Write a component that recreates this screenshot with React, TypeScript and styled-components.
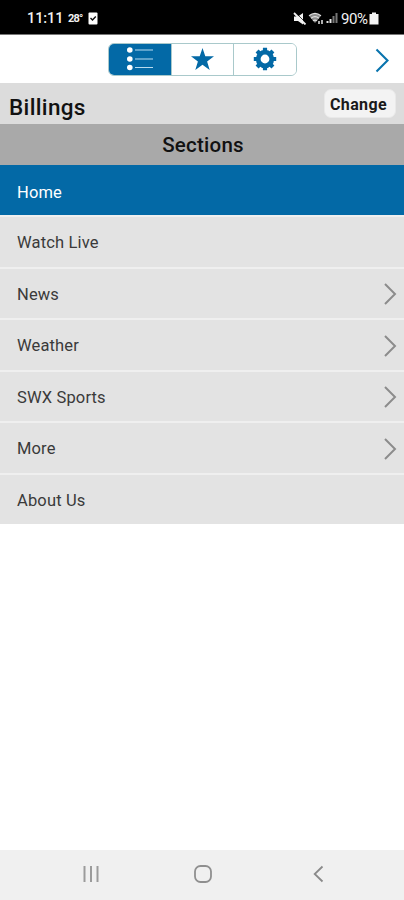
import React from 'react';
import styled, { createGlobalStyle } from 'styled-components';

const colours = {
  blue: '#0369a6',
  grey: '#e3e3e3',
  line: '#efefef',
  text: '#3a3a3a',
};

const GlobalStyle = createGlobalStyle`
  * {
    box-sizing: border-box;
  }

  body {
    margin: 0;
    background-color: #ffffff;
    font-family: Roboto, 'Liberation Sans', sans-serif;
  }
`;

const Screen = styled.div`
  display: flex;
  flex-direction: column;
  width: 100%;
  height: 100vh;
  overflow: hidden;
`;

const StatusBar = styled.div`
  display: flex;
  flex: none;
  align-items: center;
  justify-content: space-between;
  height: 35px;
  padding: 2px 25px 0 27px;
  color: #f2f2f2;
  background-color: #000000;
  border-bottom: 1px solid #777777;
`;

const StatusGroup = styled.div`
  display: flex;
  align-items: center;
`;

const Clock = styled.span`
  width: 36px;
  padding-top: 2px;
  font-size: 14.5px;
  font-weight: 500;
  letter-spacing: -0.1px;
  line-height: 18px;
  white-space: nowrap;
`;

const Temperature = styled.span`
  width: 15px;
  margin: 0 5px;
  font-size: 11px;
  font-weight: 700;
  letter-spacing: -0.8px;
`;

const Battery = styled.span`
  width: 28px;
  margin-left: 3px;
  padding-top: 2px;
  font-size: 15px;
  letter-spacing: -0.4px;
  line-height: 18px;
`;

const Toolbar = styled.div`
  display: flex;
  flex: none;
  justify-content: space-between;
  align-items: center;
  height: 48px;
  padding: 3px 14px 0 108px;
`;

const Tabs = styled.div`
  display: flex;
  width: 189px;
  height: 33px;
  margin-bottom: 3px;
  border: 1px solid #a9c9cb;
  border-radius: 6px;
  overflow: hidden;
`;

const Tab = styled.button<{ $active?: boolean }>`
  display: flex;
  flex: 1;
  align-items: center;
  justify-content: center;
  padding: 0;
  border: 0;
  color: ${({ $active }) => ($active ? '#ffffff' : colours.blue)};
  background-color: ${({ $active }) => ($active ? colours.blue : '#ffffff')};

  & + & {
    border-left: 1px solid #a9c9cb;
  }
`;

const LocationBar = styled.div`
  display: flex;
  flex: none;
  align-items: center;
  justify-content: space-between;
  height: 41px;
  padding: 0 8px 0 9px;
  background-color: #dcdcdc;
`;

const LocationName = styled.h1`
  margin: 6px 0 0;
  color: #111111;
  font-size: 22.5px;
  font-weight: 500;
  letter-spacing: 0.35px;
  line-height: 26px;
`;

const ChangeButton = styled.button`
  width: 72px;
  height: 29px;
  padding: 2px 3px 0 0;
  border: 1px solid #e9e9e9;
  border-radius: 7px;
  color: #1a1a1a;
  background-color: #f3f3f3;
  font-family: inherit;
  font-size: 16px;
  font-weight: 700;
  letter-spacing: 0.4px;
`;

const SectionTitle = styled.h2`
  flex: none;
  height: 41px;
  margin: 0;
  padding-left: 2px;
  color: #111111;
  background-color: #a9a9a9;
  font-size: 20.5px;
  font-weight: 500;
  letter-spacing: 0.25px;
  line-height: 43px;
  text-align: center;
`;

const SectionList = styled.nav`
  display: grid;
  flex: none;
  grid-template-rows: 50px;
  grid-auto-rows: 1fr;
  gap: 2px;
  height: 359px;
  background-color: ${colours.line};
`;

const SectionRow = styled.a<{ $active?: boolean }>`
  display: flex;
  align-items: center;
  justify-content: space-between;
  padding: ${({ $active }) => ($active ? 4 : 2)}px 7px 0 17px;
  color: ${({ $active }) => ($active ? '#ffffff' : colours.text)};
  background-color: ${({ $active }) => ($active ? colours.blue : colours.grey)};
  font-size: 16.5px;
  letter-spacing: 0.15px;
`;

const NavigationBar = styled.div`
  display: flex;
  flex: none;
  align-items: center;
  justify-content: space-between;
  height: 50px;
  margin-top: auto;
  padding: 0 79px 2px 81px;
  background-color: #f0f0f0;
`;

const sections = [
  { name: 'Home', active: true },
  { name: 'Watch Live' },
  { name: 'News', nested: true },
  { name: 'Weather', nested: true },
  { name: 'SWX Sports', nested: true },
  { name: 'More', nested: true },
  { name: 'About Us' },
];

const ReminderIcon = () => (
  <svg width="10" height="13" viewBox="0 0 10 13">
    <rect x="0.5" y="0.5" width="9" height="12" rx="1" fill="#ffffff" />
    <path d="M2.5 6l2 2 3.3-3.5" fill="none" stroke="#111111" strokeWidth="1.4" />
  </svg>
);

const MuteIcon = () => (
  <svg width="14" height="13" viewBox="0 0 14 13" fill="#f2f2f2">
    <path d="M1 4.5h4L10 1v11.5L5 9H1z" />
    <path d="M2.2 0.2l10.5 10.5" stroke="#000000" strokeWidth="0.8" />
    <path d="M1 1l11.5 11.5" stroke="#f2f2f2" strokeWidth="1.8" />
  </svg>
);

const WifiIcon = () => (
  <svg width="19" height="13" viewBox="0 0 19 13">
    <path d="M2 3.8Q8 -1 14 3.8L8 11z" fill="#8c8c8c" />
    <path d="M2 3.8Q8 -1 14 3.8M4 6.2Q8 3 12 6.2M6 8.8Q8 7.3 10 8.8" fill="none" stroke="#e0e0e0" strokeWidth="1.2" />
    <path d="M12 12V9M15 8v4" stroke="#e8e8e8" strokeWidth="1.5" />
  </svg>
);

const SignalIcon = () => (
  <svg width="12" height="12" viewBox="0 0 12 12" strokeWidth="2">
    <path d="M1.5 11V9M4.5 11V7" stroke="#e6e6e6" />
    <path d="M7.5 11V4M10.5 11V1" stroke="#777777" />
  </svg>
);

const BatteryIcon = () => (
  <svg width="10" height="13" viewBox="0 0 10 13" fill="#f4f4f4">
    <path d="M3 0.5h4V2h2.5v10.5h-9V2H3z" />
  </svg>
);

const ListIcon = () => (
  <svg width="28" height="24" viewBox="0 0 28 24" fill="#ffffff">
    {[3, 12, 20.5].map(y => (
      <g key={y}>
        <circle cx="3.8" cy={y} r="2.8" />
        <path d={`M9 ${y}h18`} stroke="#b9dcef" strokeWidth="1.2" />
      </g>
    ))}
  </svg>
);

const StarIcon = () => (
  <svg width="24" height="24" viewBox="0 0 24 24" fill="currentColor">
    <path d="M11.5 1l2.8 8.2h8.7l-6.9 5.2 2.6 8.6-7.2-5.2L4.3 23l2.6-8.6L0 9.2h8.7z" />
  </svg>
);

const GearIcon = () => (
  <svg width="24" height="24" viewBox="0 0 24 24" fill="none" stroke="currentColor">
    {[0, 45, 90, 135, 180, 225, 270, 315].map(angle => (
      <path key={angle} d="M12 4V0.8" strokeWidth="4.2" transform={`rotate(${angle} 12 12)`} />
    ))}
    <circle cx="12" cy="12" r="6.8" strokeWidth="4.8" />
  </svg>
);

const ForwardIcon = () => (
  <svg width="15" height="25" viewBox="0 0 15 25" fill="none" stroke="#0874ae" strokeWidth="2.1">
    <path d="M1.5 1.5l11 11-11 11" />
  </svg>
);

const RowChevron = () => (
  <svg width="14" height="22" viewBox="0 0 14 22" fill="none" stroke="#8c8c8c" strokeWidth="2">
    <path d="M2 1l10 10L2 21" />
  </svg>
);

const RecentsIcon = () => (
  <svg width="20" height="18" viewBox="0 0 20 18" stroke="#9b9b9b" strokeWidth="2">
    <path d="M3.5 1v16M10 1v16M16.5 1v16" />
  </svg>
);

const HomeIcon = () => (
  <svg width="18" height="18" viewBox="0 0 18 18" fill="none" stroke="#8f8f8f" strokeWidth="1.8">
    <rect x="1" y="1" width="16" height="16" rx="5.5" />
  </svg>
);

const BackIcon = () => (
  <svg width="20" height="18" viewBox="0 0 20 18" fill="none" stroke="#8a8a8a" strokeWidth="1.8">
    <path d="M17.5 1.5L9.7 9l7.8 7.5" />
  </svg>
);

const App = () => {
  return (
    <Screen>
      <GlobalStyle />
      <StatusBar>
        <StatusGroup>
          <Clock>11:11</Clock>
          <Temperature>28°</Temperature>
          <ReminderIcon />
        </StatusGroup>
        <StatusGroup>
          <MuteIcon />
          <WifiIcon />
          <SignalIcon />
          <Battery>90%</Battery>
          <BatteryIcon />
        </StatusGroup>
      </StatusBar>
      <Toolbar>
        <Tabs>
          <Tab $active aria-label="Sections">
            <ListIcon />
          </Tab>
          <Tab aria-label="Favorites">
            <StarIcon />
          </Tab>
          <Tab aria-label="Settings">
            <GearIcon />
          </Tab>
        </Tabs>
        <ForwardIcon />
      </Toolbar>
      <LocationBar>
        <LocationName>Billings</LocationName>
        <ChangeButton>Change</ChangeButton>
      </LocationBar>
      <SectionTitle>Sections</SectionTitle>
      <SectionList>
        {sections.map(({ name, active, nested }) => (
          <SectionRow key={name} $active={active}>
            <span>{name}</span>
            {nested && <RowChevron />}
          </SectionRow>
        ))}
      </SectionList>
      <NavigationBar>
        <RecentsIcon />
        <HomeIcon />
        <BackIcon />
      </NavigationBar>
    </Screen>
  );
};

export default App;
